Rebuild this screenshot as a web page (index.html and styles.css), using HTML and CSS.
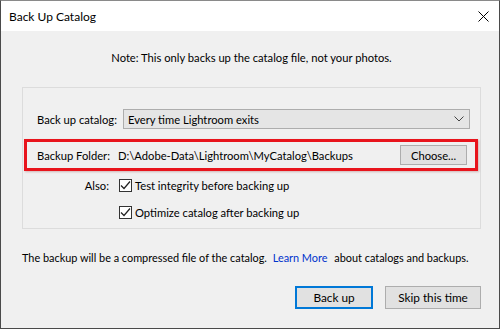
FILE: index.html
```html
<!DOCTYPE html>
<html lang="en">
<head>
  <meta charset="UTF-8">
  <title>Back Up Catalog</title>
  <link rel="stylesheet" href="styles.css">
</head>
<body>

  <div class="window">
    <div class="titlebar">
      <span class="title">Back Up Catalog</span>
      <svg class="close" width="11" height="11" viewBox="0 0 11 11">
        <path d="M0.5 0.5 L10.5 10.5 M10.5 0.5 L0.5 10.5" stroke="#000" stroke-width="1" fill="none"/>
      </svg>
    </div>

    <div class="content">
      <p class="note">Note: This only backs up the catalog file, not your photos.</p>

      <div class="group">
        <div class="row row-catalog">
          <span class="label">Back up catalog:</span>
          <div class="select">
            <span>Every time Lightroom exits</span>
            <svg width="10" height="6" viewBox="0 0 10 6">
              <path d="M0.5 0.5 L5 5 L9.5 0.5" stroke="#444" fill="none"/>
            </svg>
          </div>
        </div>

        <!-- destaque em vermelho -->
        <div class="row row-folder">
          <span class="label">Backup Folder:</span>
          <span class="path">D:\Adobe-Data\Lightroom\MyCatalog\Backups</span>
          <button class="btn btn-choose">Choose...</button>
        </div>

        <div class="row row-check">
          <span class="also">Also:</span>
          <span class="checkbox"><svg width="11" height="11" viewBox="0 0 11 11"><path d="M1 5.5 L4 8.5 L10 1.5" stroke="#222" stroke-width="1.2" fill="none"/></svg></span>
          <span>Test integrity before backing up</span>
        </div>
        <div class="row row-check">
          <span class="also"></span>
          <span class="checkbox"><svg width="11" height="11" viewBox="0 0 11 11"><path d="M1 5.5 L4 8.5 L10 1.5" stroke="#222" stroke-width="1.2" fill="none"/></svg></span>
          <span>Optimize catalog after backing up</span>
        </div>
      </div>

      <p class="info">The backup will be a compressed file of the catalog. <a href="#">Learn More</a> about catalogs and backups.</p>

      <div class="actions">
        <button class="btn btn-default">Back up</button>
        <button class="btn btn-skip">Skip this time</button>
      </div>
    </div>
  </div>

</body>
</html>
```

FILE: styles.css
```css
body {
  margin: 0;
  font-family: Lato, "Noto Sans", sans-serif;
  font-size: 11.2px;
  color: #000;
}
.window {
  width: 500px;
  height: 329px;
  box-sizing: border-box;
  border: 1px solid #4a4a4a;
  border-top-color: #8a8a8a;
  background-color: #f0f0f0;
  display: flex;
  flex-direction: column;
}
.titlebar {
  height: 30px;
  background-color: #fff;
  display: flex;
  align-items: center;
  justify-content: space-between;
  padding: 0 10px 0 8px;
}
.title {
  font-size: 12px;
}
.close {
  margin-top: 1px;
}
.content {
  flex: 1;
  padding: 0 18px 0 21px;
}
.note {
  margin: 19px 0 0;
  line-height: 16px;
  text-align: center;
}
.group {
  margin-top: 21px;
  height: 142px;
  box-sizing: border-box;
  border: 1px solid #dcdcdc;
}
.row {
  display: flex;
  align-items: center;
}
.row-catalog {
  margin-top: 21px;
  padding: 0 10px 0 14px;
}
.label {
  margin-right: 6px;
}
.select {
  flex: 1;
  height: 20px;
  box-sizing: border-box;
  border: 1px solid #adadad;
  background-color: #e5e5e5;
  display: flex;
  align-items: center;
  justify-content: space-between;
  padding: 0 5px 0 4px;
}
.row-folder {
  margin: 10px 2px 0 1px;
  padding: 3px 8px 3px 10px;
  border: 3px solid #e8141c;
  box-shadow: 1px 1px 2px rgba(120, 0, 0, 0.25);
}
.path {
  flex: 1;
  margin-left: 2px;
}
.btn {
  font-family: inherit;
  font-size: 11.8px;
  color: #000;
  background-color: #e1e1e1;
  border: 1px solid #adadad;
  padding: 0;
  margin: 0;
}
.btn-choose {
  width: 67px;
  height: 20px;
  font-size: 11.2px;
}
.row-check {
  height: 13px;
}
.row-check:nth-of-type(3) {
  margin-top: 8px;
}
.row-check:nth-of-type(4) {
  margin-top: 14px;
}
.also {
  width: 86px;
  text-align: right;
  margin-right: 10px;
}
.checkbox {
  width: 13px;
  height: 13px;
  box-sizing: border-box;
  border: 1px solid #333;
  background-color: #fff;
  display: flex;
  align-items: center;
  justify-content: center;
  margin-right: 3px;
}
.info {
  margin: 21px 0 0;
  line-height: 16px;
  font-size: 10.9px;
  white-space: nowrap;
}
.info a {
  color: #0033cc;
  text-decoration: none;
  margin: 0 4px 0 3px;
}
.actions {
  margin-top: 20px;
  display: flex;
  justify-content: flex-end;
  gap: 12px;
}
.btn-default {
  width: 78px;
  height: 23px;
  border: 2px solid #0078d7;
}
.btn-skip {
  width: 96px;
  height: 23px;
}
```
